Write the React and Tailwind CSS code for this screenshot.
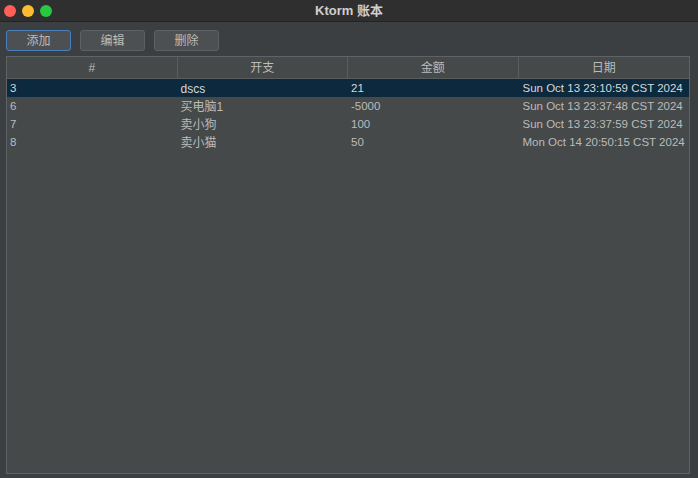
import React from "react";

const rows = [
  { id: "3", name: "dscs", amount: "21", date: "Sun Oct 13 23:10:59 CST 2024" },
  { id: "6", name: "买电脑1", amount: "-5000", date: "Sun Oct 13 23:37:48 CST 2024" },
  { id: "7", name: "卖小狗", amount: "100", date: "Sun Oct 13 23:37:59 CST 2024" },
  { id: "8", name: "卖小猫", amount: "50", date: "Mon Oct 14 20:50:15 CST 2024" },
];

const font = { fontFamily: '"Liberation Sans", "Noto Sans CJK SC", sans-serif' };

function Btn({ label, active }) {
  return (
    <button
      type="button"
      className={`w-[65px] h-[21px] rounded-[3px] bg-[#4c5052] text-[12px] text-[#bbbbbb] flex items-center justify-center border ${
        active ? "border-[#4a7fbf]" : "border-[#5e6163]"
      }`}
    >
      {label}
    </button>
  );
}

export default function App() {
  return (
    <div className="w-[698px] h-[478px] bg-[#3c3f41] flex flex-col overflow-hidden" style={font}>
      <div className="h-[22px] bg-[#2f2f2f] border-b border-[#232323] flex items-center relative shrink-0">
        <div className="flex items-center gap-[6px] pl-[4px]">
          <span className="w-[12px] h-[12px] rounded-full bg-[#fe5f57]" />
          <span className="w-[12px] h-[12px] rounded-full bg-[#febc2e]" />
          <span className="w-[12px] h-[12px] rounded-full bg-[#28c840]" />
        </div>
        <div className="flex-1 text-center text-[13px] font-bold text-[#cfcfcf] pr-[52px]">Ktorm 账本</div>
      </div>

      <div className="flex gap-[9px] px-[6px] pt-[8px] shrink-0">
        <Btn label="添加" active />
        <Btn label="编辑" />
        <Btn label="删除" />
      </div>

      <div className="ml-[6px] mr-[8px] mt-[5px] mb-[4px] flex-1 bg-[#45494a] border border-[#606365] flex flex-col">
        <div className="grid grid-cols-4 h-[22px] border-b border-[#5a5d5f] text-[12px] text-[#bbbbbb]">
          {["#", "开支", "金额", "日期"].map((h, i) => (
            <div
              key={h}
              className={`flex items-center justify-center ${i < 3 ? "border-r border-[#5a5d5f]" : ""}`}
            >
              {h}
            </div>
          ))}
        </div>
        {rows.map((r, i) => (
          <div
            key={r.id}
            className={`grid grid-cols-4 h-[18px] items-center text-[11.5px] ${
              i === 0 ? "bg-[#0d293e] text-[#d8d8d8]" : "text-[#bbbbbb]"
            }`}
          >
            <div className="pl-[3px] pt-[1px]">{r.id}</div>
            <div className="pl-[3px] pt-[1px] text-[12px]">{r.name}</div>
            <div className="pl-[3px] pt-[1px]">{r.amount}</div>
            <div className="pl-[4px] pt-[1px] whitespace-nowrap">{r.date}</div>
          </div>
        ))}
      </div>
    </div>
  );
}
